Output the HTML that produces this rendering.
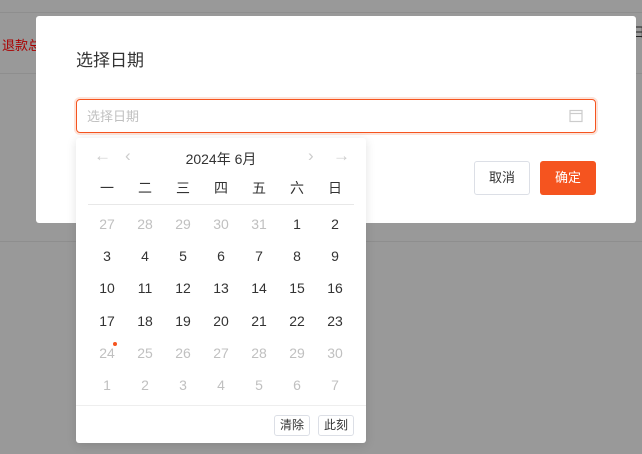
<!DOCTYPE html>
<html><head><meta charset="utf-8"><style>
*{box-sizing:border-box;margin:0;padding:0}
body{width:642px;height:454px;overflow:hidden;background:#999;font-family:"Liberation Sans","Noto Sans CJK SC",sans-serif;position:relative}
.ln{position:absolute;left:0;width:642px;height:1px;background:#8e8e8e}
.modal{position:absolute;left:36px;top:16px;width:600px;height:207px;background:#fff;border-radius:3px}
.title{position:absolute;left:40px;top:30px;font-size:17px;color:#333}
.inp{position:absolute;left:40px;top:83px;width:520px;height:34px;border:1px solid #f5541f;border-radius:4px;box-shadow:0 0 0 2px #fde3d9}
.inp span{position:absolute;left:10px;top:6px;font-size:13px;color:#c0c0c0}
.btn{position:absolute;top:145px;height:34px;width:56px;font-size:13px;border-radius:3px;text-align:center;line-height:32px}
.pop{position:absolute;left:76px;top:138px;width:290px;height:305px;background:#fff;border-radius:3px;box-shadow:0 2px 10px rgba(0,0,0,.12)}
.c{position:absolute;width:38px;text-align:center;font-size:14px;color:#333}
.g{color:#c0c0c0}
.fb{position:absolute;top:277px;height:21px;width:36px;border:1px solid #dcdfe6;border-radius:3px;font-size:12px;line-height:19px;text-align:center;color:#333}
.ar{position:absolute;top:8px;font-size:17px;color:#ccc}
</style></head><body>
<div class="ln" style="top:12px"></div>
<div class="ln" style="top:73px"></div>
<div class="ln" style="top:241px"></div>
<div style="position:absolute;left:2px;top:35px;font-size:13px;color:#a00">退款总</div>
<div style="position:absolute;left:632px;top:22px;font-size:13px;color:#222">日</div>
<div class="modal">
<div class="title">选择日期</div>
<div class="inp"><span>选择日期</span>
<svg style="position:absolute;right:12px;top:9px" width="14" height="14" viewBox="0 0 14 14"><rect x="1" y="1.5" width="12" height="11" fill="none" stroke="#ccc" stroke-width="1.2"/><line x1="1" y1="4.5" x2="13" y2="4.5" stroke="#ccc" stroke-width="1.2"/></svg></div>
<div class="btn" style="left:438px;border:1px solid #dcdfe6;color:#333">取消</div>
<div class="btn" style="left:504px;background:#f5541f;color:#fff;line-height:34px">确定</div>
</div>
<div class="pop">
<div class="ar" style="left:18px">←</div>
<div class="ar" style="left:49px">‹</div>
<div style="position:absolute;left:0;width:290px;top:11px;text-align:center;font-size:14px;color:#333">2024年 6月</div>
<div class="ar" style="left:232px">›</div>
<div class="ar" style="left:257px">→</div>
<div style="position:absolute;left:12px;top:66px;width:266px;height:1px;background:#e8e8e8"></div>
<div style="position:absolute;left:0;top:267px;width:290px;height:1px;background:#eee"></div>
<div id="g"></div>
<div style="position:absolute;left:37px;top:204px;width:4px;height:4px;border-radius:2px;background:#f5541f"></div>
<div class="fb" style="left:198px">清除</div>
<div class="fb" style="left:242px">此刻</div>
</div>
<script>
var h='',w=['一','二','三','四','五','六','日'];
for(var i=0;i<7;i++)h+='<div class="c" style="left:'+(12+i*38)+'px;top:40px">'+w[i]+'</div>';
var d=[27,28,29,30,31,1,2];for(var n=3;n<=30;n++)d.push(n);for(n=1;n<=7;n++)d.push(n);
for(i=0;i<42;i++){var r=Math.floor(i/7),c=i%7,gr=(i<5||i>=28);
h+='<div class="c'+(gr?' g':'')+'" style="left:'+(12+c*38)+'px;top:'+(78+r*32.2)+'px">'+d[i]+'</div>';}
document.getElementById('g').innerHTML=h;
</script>
</body></html>
